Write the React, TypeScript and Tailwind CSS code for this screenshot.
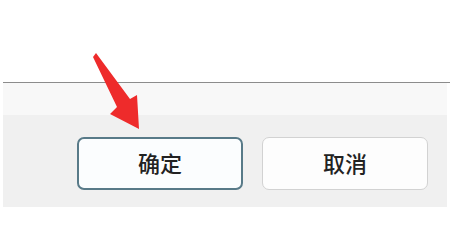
const font = { fontFamily: '"Noto Sans CJK SC", "Microsoft YaHei", sans-serif' };

export default function App() {
  return (
    <div className="relative w-[450px] h-[249px] bg-white overflow-hidden" style={font}>
      <div className="h-[82px]" />
      <div className="ml-[3px] h-px bg-[#8c8c8c]" />
      <div className="ml-[3px] mr-[3px]">
        <div className="h-[32px] bg-[#f8f8f8]" />
        <div className="h-[92px] bg-[#f0f0f0] flex items-start pt-[22px] pl-[74px] gap-[19px]">
          <button className="w-[166px] h-[53px] rounded-[7px] border-2 border-[#587a88] bg-[#fbfdfe] text-[22px] font-medium text-[#222] leading-none pb-[3px]">
            确定
          </button>
          <button className="w-[166px] h-[53px] rounded-[7px] border border-[#d2d2d2] bg-[#fdfdfd] text-[22px] font-medium text-[#222] leading-none pb-[3px]">
            取消
          </button>
        </div>
      </div>

      {/* red annotation arrow */}
      <svg className="absolute left-0 top-0" width="450" height="249" viewBox="0 0 450 249">
        <polygon
          points="96,53 130,99 137,95 139,129 110,114 117,107 93,57"
          fill="#ee2b2b"
        />
      </svg>
    </div>
  );
}
